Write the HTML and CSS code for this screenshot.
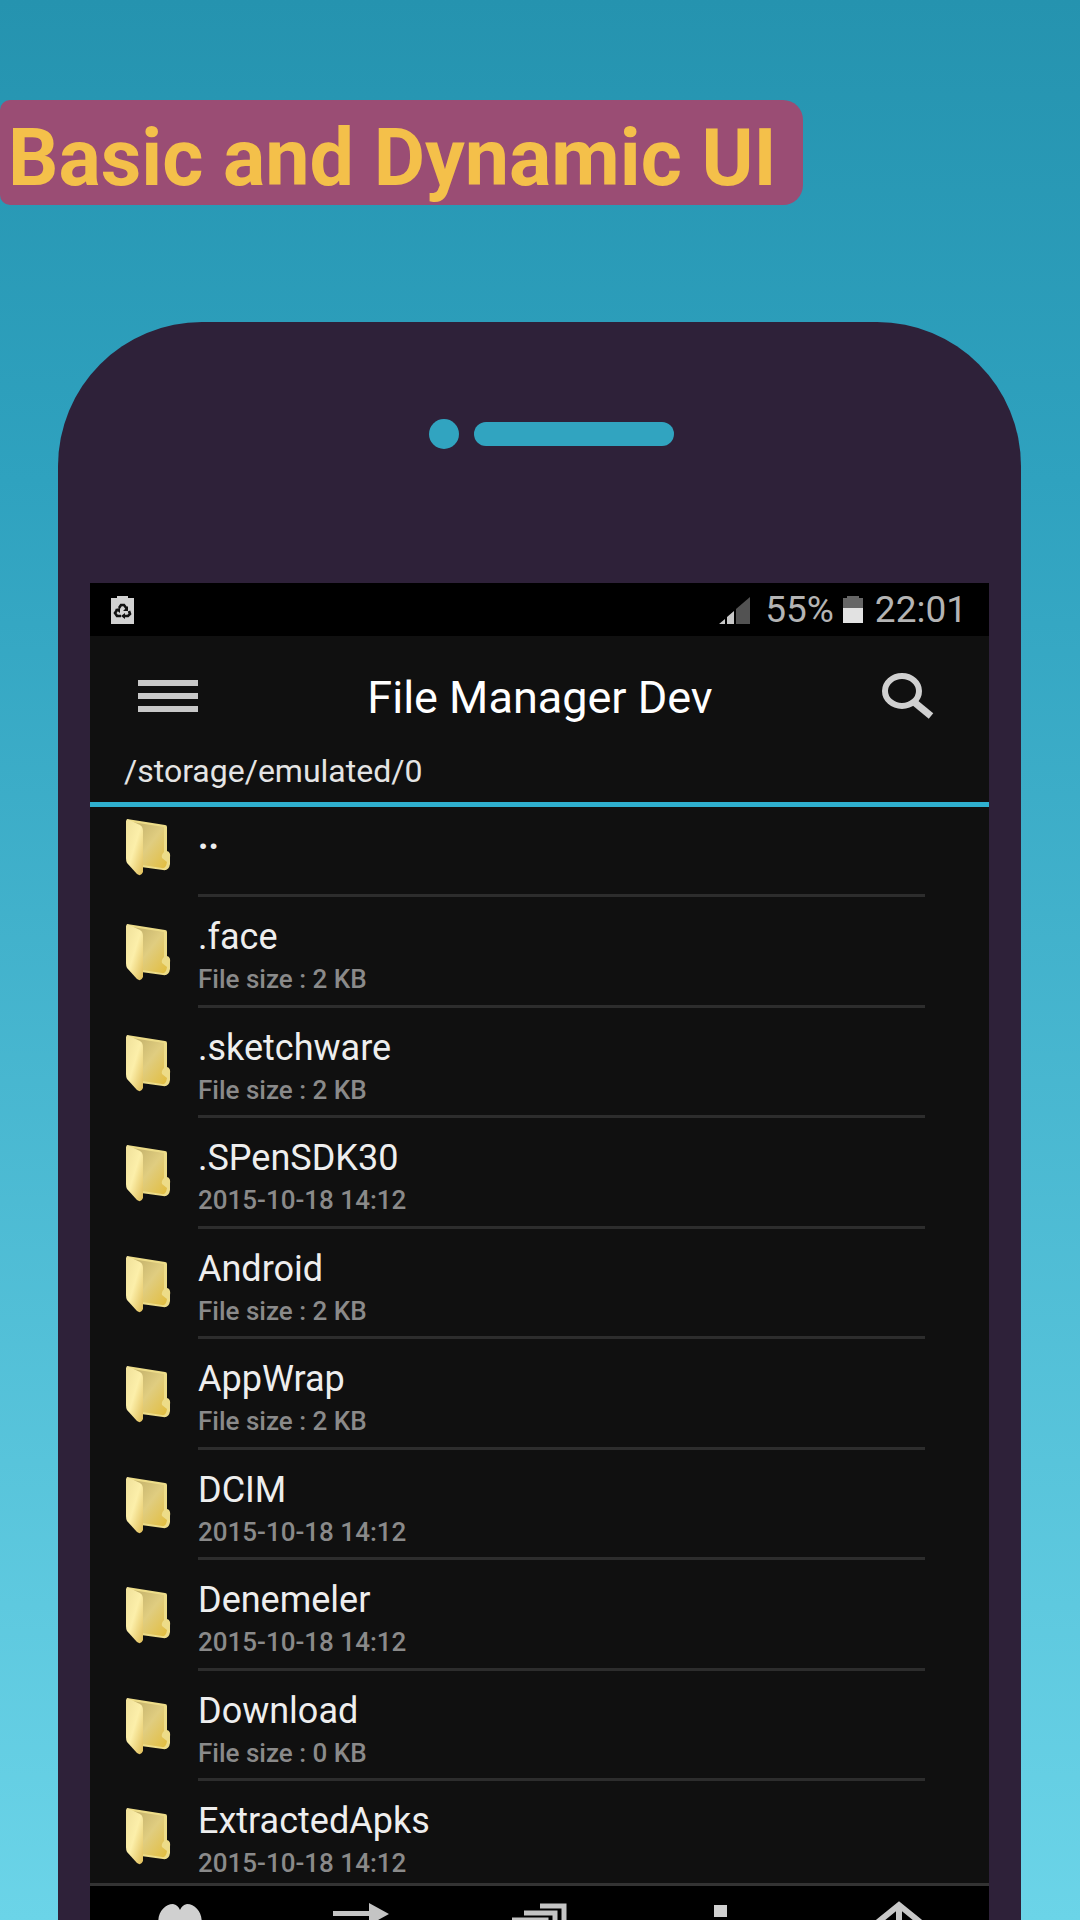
FILE: index.html
```html
<!DOCTYPE html>
<html lang="en">
<head>
<meta charset="utf-8">
<meta name="viewport" content="width=device-width, initial-scale=1">
<title>File Manager Dev</title>
<link rel="stylesheet" href="styles.css">
</head>
<body>
<svg class="defs" width="0" height="0" aria-hidden="true">
  <defs>
    <linearGradient id="flap" x1="0" y1="0" x2="1" y2="1">
      <stop offset="0" stop-color="#efe09a"/><stop offset=".5" stop-color="#fcefaa"/><stop offset="1" stop-color="#dfbd58"/>
    </linearGradient>
    <linearGradient id="inside" x1="0" y1="0" x2="1" y2="1">
      <stop offset="0" stop-color="#c0ae68"/><stop offset=".5" stop-color="#e0cd80"/><stop offset="1" stop-color="#e2bd3e"/>
    </linearGradient>
    <symbol id="folder" viewBox="0 0 46 58">
      <path d="M2 1 40 7Q42 7 42 9V33Q46 34 45 40V46Q44 53 38 52L16 49Z" fill="#eddc88"/>
      <path d="M7 4 39 9V34Q36 37 37 40L42 44Q41 51 37 50L17 47V9Z" fill="url(#inside)"/>
      <path d="M2 1 15 7Q18 9 18 13V54Q16 59 12 56L2 45Q1 43 1 40V3Z" fill="url(#flap)"/>
    </symbol>
  </defs>
</svg>
<header class="banner"><h1 class="badge">Basic and Dynamic UI</h1></header>
<main class="phone">
  <div class="speaker"><span class="camera"></span><span class="slot"></span></div>
  <section class="screen">
    <div class="status">
      <svg class="recycle" viewBox="0 0 23 29" aria-hidden="true"><path d="M0 3H6V1H17V3H23V29H0Z" fill="#d2d2d2"/><path d="M8 13 10 10H13L16 14M18 16 19 19 17 21H13M10 21H6L4 18 6 15" fill="none" stroke="#111" stroke-width="2.6"/><path d="M17 11V16H12ZM14 18V24L10 21ZM4 14 9 13 9 18Z" fill="#111"/></svg>
      <svg class="signal" viewBox="0 0 32 28" aria-hidden="true"><path d="M0 28 6 23V28ZM8 28V21L15 15V28Z" fill="#c8c8c8"/><path d="M17 28V13L31 1V28Z" fill="#525252"/></svg>
      <span>55%</span>
      <svg class="battery" viewBox="0 0 20 27" aria-hidden="true"><path d="M0 2H4V0H16V2H20V13H0Z" fill="#666"/><path d="M0 12H20V27H0Z" fill="#e2e2e2"/></svg>
      <time>22:01</time>
    </div>
    <div class="appbar">
      <button class="icon-button" aria-label="Menu"><svg class="menu" viewBox="0 0 60 34"><path d="M0 4H60M0 17H60M0 30H60" stroke="#c8c8c8" stroke-width="6"/></svg></button>
      <h2 class="title">File Manager Dev</h2>
      <button class="icon-button" aria-label="Search"><svg class="search" viewBox="0 0 52 46"><ellipse cx="20" cy="18" rx="17" ry="15" fill="none" stroke="#d0d0d0" stroke-width="6"/><path d="M32 29 49 43" stroke="#d0d0d0" stroke-width="7"/></svg></button>
    </div>
    <p class="path">/storage/emulated/0</p>
    <ul class="files">
      <li class="file"><svg class="folder" aria-hidden="true"><use href="#folder"/></svg><div class="info"><span class="name parent">..</span></div></li>
      <li class="file"><svg class="folder" aria-hidden="true"><use href="#folder"/></svg><div class="info"><span class="name">.face</span><span class="detail">File size : 2 KB</span></div></li>
      <li class="file"><svg class="folder" aria-hidden="true"><use href="#folder"/></svg><div class="info"><span class="name">.sketchware</span><span class="detail">File size : 2 KB</span></div></li>
      <li class="file"><svg class="folder" aria-hidden="true"><use href="#folder"/></svg><div class="info"><span class="name">.SPenSDK30</span><span class="detail">2015-10-18 14:12</span></div></li>
      <li class="file"><svg class="folder" aria-hidden="true"><use href="#folder"/></svg><div class="info"><span class="name">Android</span><span class="detail">File size : 2 KB</span></div></li>
      <li class="file"><svg class="folder" aria-hidden="true"><use href="#folder"/></svg><div class="info"><span class="name">AppWrap</span><span class="detail">File size : 2 KB</span></div></li>
      <li class="file"><svg class="folder" aria-hidden="true"><use href="#folder"/></svg><div class="info"><span class="name">DCIM</span><span class="detail">2015-10-18 14:12</span></div></li>
      <li class="file"><svg class="folder" aria-hidden="true"><use href="#folder"/></svg><div class="info"><span class="name">Denemeler</span><span class="detail">2015-10-18 14:12</span></div></li>
      <li class="file"><svg class="folder" aria-hidden="true"><use href="#folder"/></svg><div class="info"><span class="name">Download</span><span class="detail">File size : 0 KB</span></div></li>
      <li class="file"><svg class="folder" aria-hidden="true"><use href="#folder"/></svg><div class="info"><span class="name">ExtractedApks</span><span class="detail">2015-10-18 14:12</span></div></li>
    </ul>
    <nav class="toolbar">
      <button class="tool" aria-label="Favorites"><svg viewBox="0 0 60 60"><path d="M30 53 12 33C3 19 12 4 23 4Q28 5 30 10Q32 5 37 4C48 4 57 19 48 33Z" fill="#d0d0d0"/></svg></button>
      <button class="tool" aria-label="Move"><svg viewBox="0 0 60 60"><path d="M3 11H39V3L59 14 39 25V16H3ZM57 42H21V33L1 44 21 55V46H57Z" fill="#c4c4c4"/></svg></button>
      <button class="tool" aria-label="Copy"><svg viewBox="0 0 60 60"><path d="M31 6H55V34M15 13H46V43M3 20H37V51H5V20" fill="none" stroke="#c4c4c4" stroke-width="5"/></svg></button>
      <button class="tool" aria-label="More"><svg viewBox="0 0 60 60"><path d="M25 5H38V17H25ZM25 24H38V36H25ZM25 43H38V55H25Z" fill="#d0d0d0"/></svg></button>
      <button class="tool" aria-label="Up"><svg viewBox="0 0 60 60"><path d="M30 5V55M9 22 30 5 51 22" fill="none" stroke="#c8c8c8" stroke-width="6"/></svg></button>
    </nav>
  </section>
</main>
</body>
</html>
```
FILE: styles.css
```css
* { box-sizing: border-box; }
body {
  margin: 0;
  min-height: 100vh;
  display: flex;
  flex-direction: column;
  background: linear-gradient(#2593af, #2fa2bf 25%, #6bd4e8);
  font-family: Roboto, "Liberation Sans", sans-serif;
}
h1, h2, p, ul { margin: 0; padding: 0; }
svg { display: block; }
button { border: 0; padding: 0; background: none; }
.defs { position: absolute; }
.banner { padding: 100px 0 117px; display: flex; }
.badge {
  padding: 5px 26px 0 8px;
  height: 105px;
  line-height: 106px;
  border-radius: 10px 20px 20px 10px;
  background: #9a4d74;
  color: #f4c04a;
  font-size: 79px;
  font-weight: 700;
  white-space: nowrap;
}
.phone {
  flex: 1;
  display: flex;
  flex-direction: column;
  margin: 0 59px 0 58px;
  padding: 0 32px;
  border-radius: 144px 144px 0 0;
  background: #2e2139;
}
.speaker {
  height: 261px;
  padding: 97px 0 0 339px;
  display: flex;
  gap: 15px;
}
.camera { width: 30px; height: 30px; border-radius: 50%; background: #31a4c0; }
.slot { width: 200px; height: 24px; margin-top: 3px; border-radius: 12px; background: #31a4c0; }
.screen { flex: 1; display: flex; flex-direction: column; background: #101010; }
.status {
  height: 53px;
  padding: 0 22px 0 21px;
  display: flex;
  align-items: center;
  background: #000;
  color: #b4b4b4;
  font-size: 37px;
}
.recycle { width: 23px; height: 29px; margin-right: auto; }
.signal { width: 32px; height: 28px; margin-right: 14px; }
.battery { width: 20px; height: 27px; margin: 0 12px 0 9px; }
.appbar {
  height: 110px;
  padding: 10px 55px 0 48px;
  display: flex;
  align-items: center;
  justify-content: space-between;
}
.menu { width: 60px; height: 34px; }
.search { width: 52px; height: 46px; }
.title { padding-top: 4px; color: #fff; font-size: 45px; line-height: 52px; font-weight: 400; }
.path {
  height: 61px;
  padding-left: 34px;
  line-height: 50px;
  border-bottom: 5px solid #2fb0cf;
  color: #e4e4e4;
  font-size: 32px;
}
.files {
  flex: 1;
  display: grid;
  grid-template-rows: 90px repeat(9, minmax(110px, 1fr));
  margin-bottom: -9px;
  list-style: none;
}
.file { display: flex; padding: 0 64px 0 35px; }
.folder { width: 46px; height: 58px; margin-top: 26px; }
.file:first-child .folder { margin-top: 11px; }
.info {
  flex: 1;
  display: flex;
  flex-direction: column;
  margin-left: 27px;
  padding-top: 18px;
  border-bottom: 3px solid #2d2d2d;
}
.name { color: #eee; font-size: 36px; line-height: 44px; }
.parent { margin-top: -10px; font-weight: 700; }
.detail { color: #8a8a8a; font-size: 26px; line-height: 40px; font-weight: 500; }
.toolbar {
  position: relative;
  height: 37px;
  display: flex;
  overflow: hidden;
  border-top: 3px solid #333;
  background: #000;
}
.tool { flex: 1; display: flex; justify-content: center; padding-top: 14px; }
.tool svg { width: 60px; height: 60px; flex: none; }
```
